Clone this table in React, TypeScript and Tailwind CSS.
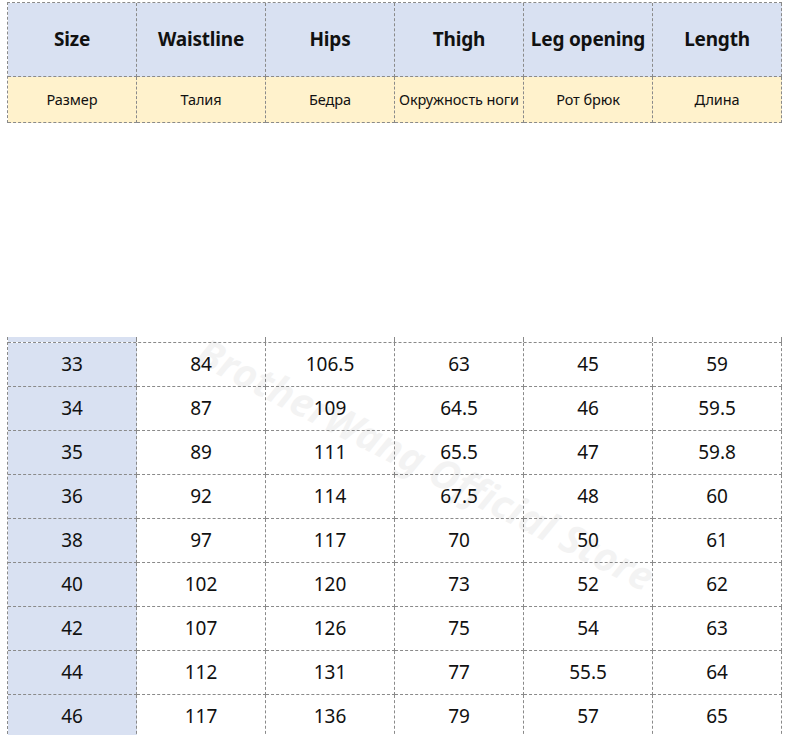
const headers = ["Size", "Waistline", "Hips", "Thigh", "Leg opening", "Length"];
const ru = ["Размер", "Талия", "Бедра", "Окружность ноги", "Рот брюк", "Длина"];

const rows = [
  ["33", "84", "106.5", "63", "45", "59"],
  ["34", "87", "109", "64.5", "46", "59.5"],
  ["35", "89", "111", "65.5", "47", "59.8"],
  ["36", "92", "114", "67.5", "48", "60"],
  ["38", "97", "117", "70", "50", "61"],
  ["40", "102", "120", "73", "52", "62"],
  ["42", "107", "126", "75", "54", "63"],
  ["44", "112", "131", "77", "55.5", "64"],
  ["46", "117", "136", "79", "57", "65"],
];

const cell = "w-[129px] shrink-0 flex items-center justify-center border-r border-b border-dashed border-[#8a8a8a]";

export default function App() {
  return (
    <div
      className="relative w-[786px] h-[735px] overflow-hidden bg-white text-[#111]"
      style={{ fontFamily: '"Noto Sans", "Open Sans", sans-serif' }}
    >
      <div className="ml-[7px] mt-[2px] w-[775px] border-l border-t border-dashed border-[#8a8a8a]">
        <div className="flex h-[74px] bg-[#d9e1f2]">
          {headers.map((h) => (
            <div key={h} className={`${cell} text-[19px] font-bold tracking-[-0.2px]`}>
              {h}
            </div>
          ))}
        </div>
        <div className="flex h-[46px] bg-[#fff2cc]">
          {ru.map((h) => (
            <div key={h} className={`${cell} text-[14.5px] whitespace-nowrap tracking-[-0.1px]`}>
              {h}
            </div>
          ))}
        </div>
      </div>

      <div className="ml-[7px] mt-[214px] w-[775px] border-l border-dashed border-[#8a8a8a]">
        <div className="flex h-[5px]">
          {headers.map((h, i) => (
            <div
              key={h}
              className={`w-[129px] shrink-0 border-r border-dashed border-[#8a8a8a] ${i === 0 ? "bg-[#d9e1f2]" : ""}`}
            />
          ))}
        </div>
        <div className="border-t border-dashed border-[#8a8a8a]">
          {rows.map((r) => (
            <div key={r[0]} className="flex h-[44px]">
              {r.map((v, i) => (
                <div key={i} className={`${cell} text-[19px] ${i === 0 ? "bg-[#d9e1f2]" : ""}`}>
                  {v}
                </div>
              ))}
            </div>
          ))}
        </div>
      </div>

      <div className="pointer-events-none absolute left-[200px] top-[319px] origin-left rotate-[27deg] whitespace-nowrap text-[40px] leading-[60px] font-bold italic text-[#000] opacity-[0.045]">
        BrotherWang Official Store
      </div>
    </div>
  );
}
